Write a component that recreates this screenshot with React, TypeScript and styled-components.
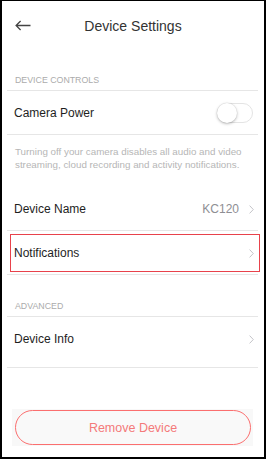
import React from "react";
import styled, { createGlobalStyle } from "styled-components";

const GlobalStyle = createGlobalStyle`
  html, body { margin: 0; padding: 0; background: #ffffff; }
  body { font-family: "Liberation Sans", Arial, sans-serif; -webkit-font-smoothing: antialiased; }
  * { box-sizing: border-box; }
`;

const Frame = styled.div`
  width: 266px;
  height: 459px;
  border-style: solid;
  border-color: #000;
  border-width: 1px 2px 2px 2px;
  background: #fff;
  display: flex;
  flex-direction: column;
  overflow: hidden;
`;

const Header = styled.header`
  height: 48px;
  flex: none;
  display: grid;
  grid-template-columns: 40px 1fr 40px;
  align-items: center;
  padding-top: 1px;
`;

const BackButton = styled.button`
  border: none;
  background: none;
  padding: 0 0 0 13px;
  margin: 0;
  display: flex;
  align-items: center;
  justify-self: start;
  cursor: pointer;
`;

const Title = styled.h1`
  margin: 0;
  text-align: center;
  font-size: 14px;
  font-weight: 400;
  color: #333;
`;

const SectionLabel = styled.div`
  flex: none;
  height: 41px;
  display: flex;
  align-items: flex-end;
  padding: 0 0 4px 13px;
  font-size: 8.8px;
  line-height: 11px;
  color: #ababab;
`;

const List = styled.div<{ $topLine?: boolean }>`
  flex: none;
  margin: 0 6px 0 5px;
  border-top: ${(p) => (p.$topLine ? "1px solid #e6e6e6" : "none")};
`;

const Row = styled.div<{ $extraBottom?: number }>`
  position: relative;
  height: ${(p) => 44 + (p.$extraBottom ?? 0)}px;
  padding: 1px 4px ${(p) => p.$extraBottom ?? 0}px 7px;
  display: flex;
  align-items: center;
  border-bottom: 1px solid #e6e6e6;
`;

const RowLabel = styled.span`
  flex: 1;
  font-size: 12px;
  color: #1e1e1e;
`;

const RowValue = styled.span`
  font-size: 12px;
  color: #8e8e93;
  margin-right: 10px;
`;

const Highlight = styled.div`
  position: absolute;
  left: 3px;
  right: -2px;
  top: 3px;
  bottom: 2px;
  border: 1.6px solid #e8424b;
  pointer-events: none;
`;

const Toggle = styled.div`
  width: 36px;
  height: 20px;
  border-radius: 10px;
  border: 1px solid #e4e4e4;
  background: #fff;
  position: relative;
  margin-right: 1px;
`;

const Knob = styled.div`
  position: absolute;
  left: -1px;
  top: -1px;
  width: 20px;
  height: 20px;
  border-radius: 50%;
  background: #fff;
  box-shadow: 0 1px 3px rgba(0, 0, 0, 0.28), 0 0 0 0.5px rgba(0, 0, 0, 0.06);
`;

const Description = styled.p`
  flex: none;
  margin: 0;
  padding: 10px 6px 16px 13px;
  font-size: 9.8px;
  line-height: 13px;
  color: #b6b6b6;
`;

const Footer = styled.div`
  flex: 1;
  display: flex;
  align-items: flex-end;
  padding: 0 11px 11px 10px;
`;

const ButtonWell = styled.div`
  width: 100%;
  height: 37px;
  background: #f8f8f8;
  padding: 1px 2px 1px 3px;
`;

const RemoveButton = styled.button`
  width: 100%;
  height: 100%;
  border: 1.5px solid #fb6f6f;
  border-radius: 18px;
  background: #f9f9f9;
  color: #f47a7a;
  font-family: "Liberation Sans", Arial, sans-serif;
  font-size: 12.5px;
  cursor: pointer;
`;

const Chevron = () => (
  <svg width="5" height="9" viewBox="0 0 5 9" fill="none">
    <path d="M0.6 0.6 L4.3 4.5 L0.6 8.4" stroke="#c4c4c8" strokeWidth="1" />
  </svg>
);

const BackArrow = () => (
  <svg width="16" height="11" viewBox="0 0 16 11" fill="none">
    <path d="M15.5 5.5 H1.2 M5.6 1 L1.1 5.5 L5.6 10" stroke="#444" strokeWidth="1.3" />
  </svg>
);

export default function App() {
  return (
    <>
      <GlobalStyle />
      <Frame>
        <Header>
          <BackButton aria-label="Back">
            <BackArrow />
          </BackButton>
          <Title>Device Settings</Title>
          <span />
        </Header>

        <SectionLabel>DEVICE CONTROLS</SectionLabel>
        <List $topLine>
          <Row>
            <RowLabel>Camera Power</RowLabel>
            <Toggle>
              <Knob />
            </Toggle>
          </Row>
        </List>
        <Description>
          Turning off your camera disables all audio and video streaming, cloud recording and activity notifications.
        </Description>

        <List>
          <Row>
            <RowLabel>Device Name</RowLabel>
            <RowValue>KC120</RowValue>
            <Chevron />
          </Row>
          <Row>
            <RowLabel>Notifications</RowLabel>
            <Chevron />
            <Highlight />
          </Row>
        </List>

        <SectionLabel>ADVANCED</SectionLabel>
        <List $topLine>
          <Row $extraBottom={7}>
            <RowLabel>Device Info</RowLabel>
            <Chevron />
          </Row>
        </List>

        <Footer>
          <ButtonWell>
            <RemoveButton>Remove Device</RemoveButton>
          </ButtonWell>
        </Footer>
      </Frame>
    </>
  );
}
